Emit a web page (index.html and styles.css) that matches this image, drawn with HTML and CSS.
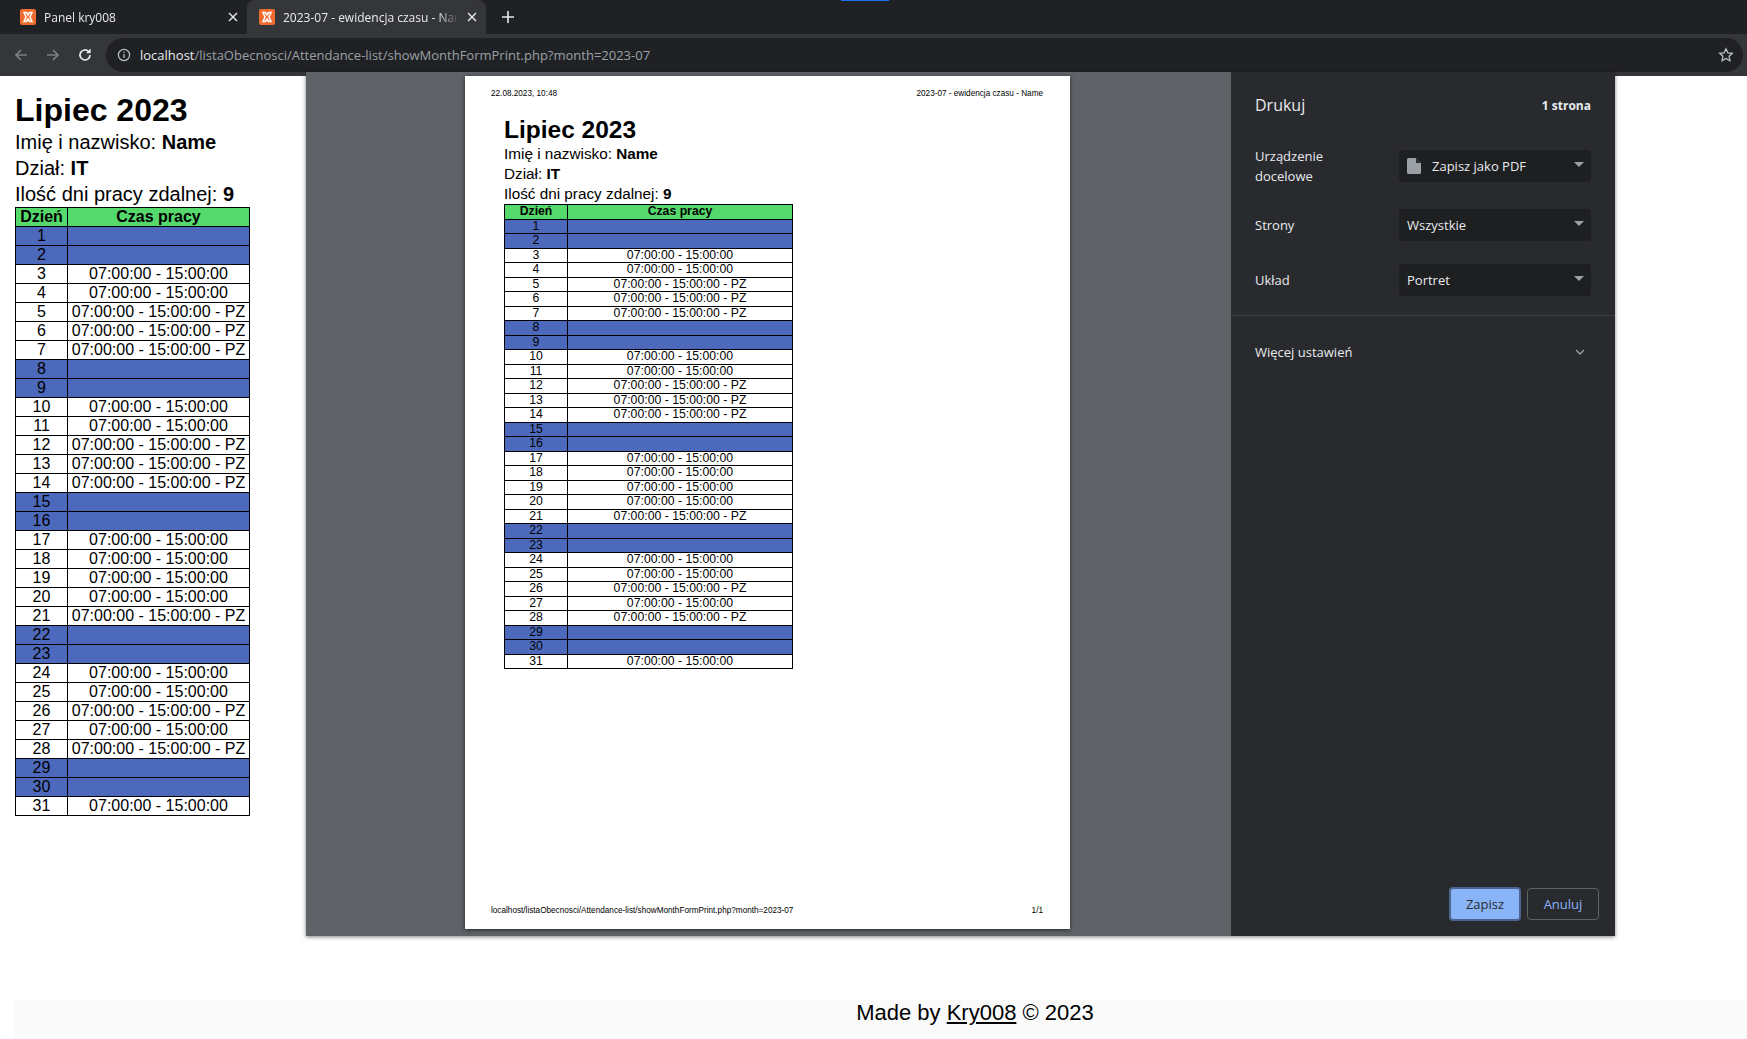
FILE: index.html
```html
<!DOCTYPE html>
<html lang="pl">
<head>
  <meta charset="UTF-8" />
  <title>2023-07 - ewidencja czasu - Name</title>
  <link rel="stylesheet" href="styles.css">
</head>
<body>
  <div class="tab-strip">
    <div class="loading-mark"></div>
    <div class="tab">
      <svg class="favicon" viewBox="0 0 16 16"><rect width="16" height="16" rx="2" fill="#f26b2e"/><path d="M4 3.5h2.5L8 6l1.5-2.5H12l-2 4.5 2 4.5H9.5L8 10l-1.5 2.5H4l2-4.5z" fill="none" stroke="#fff" stroke-width="1.5"/></svg>
      <span class="tab-title">Panel kry008</span>
      <svg class="tab-close" viewBox="0 0 10 10"><path d="M1 1l8 8M9 1l-8 8" stroke="#e8eaed" stroke-width="1.4"/></svg>
    </div>
    <div class="tab tab-active">
      <svg class="favicon" viewBox="0 0 16 16"><rect width="16" height="16" rx="2" fill="#f26b2e"/><path d="M4 3.5h2.5L8 6l1.5-2.5H12l-2 4.5 2 4.5H9.5L8 10l-1.5 2.5H4l2-4.5z" fill="none" stroke="#fff" stroke-width="1.5"/></svg>
      <span class="tab-title">2023-07 - ewidencja czasu - Name</span>
      <svg class="tab-close" viewBox="0 0 10 10"><path d="M1 1l8 8M9 1l-8 8" stroke="#e8eaed" stroke-width="1.4"/></svg>
    </div>
    <svg class="new-tab" viewBox="0 0 12 12"><path d="M6 0v12M0 6h12" stroke="#e8eaed" stroke-width="1.6"/></svg>
  </div>

  <div class="toolbar">
    <svg class="nav-icon" viewBox="0 0 16 16"><path d="M14 8H3M8 3L3 8l5 5" fill="none" stroke="#7b7e83" stroke-width="1.7"/></svg>
    <svg class="nav-icon" viewBox="0 0 16 16"><path d="M2 8h11M8 3l5 5-5 5" fill="none" stroke="#7b7e83" stroke-width="1.7"/></svg>
    <svg class="nav-icon" viewBox="0 0 16 16"><path d="M13 8a5 5 0 1 1-1.5-3.6" fill="none" stroke="#e8eaed" stroke-width="1.7"/><path d="M13.6 1.6v4.6H9z" fill="#e8eaed"/></svg>
    <div class="omnibox">
      <svg class="info-icon" viewBox="0 0 14 14"><circle cx="7" cy="7" r="5.6" fill="none" stroke="#bdc1c6" stroke-width="1.2"/><path d="M7 6v4M7 3.8v1.3" stroke="#bdc1c6" stroke-width="1.2"/></svg>
      <span class="url"><span class="url-host">localhost</span>/listaObecnosci/Attendance-list/showMonthFormPrint.php?month=2023-07</span>
      <svg class="star-icon" viewBox="0 0 16 16"><path d="M8 1.8l1.9 4 4.4.5-3.2 3 .8 4.4L8 11.5l-3.9 2.2.8-4.4-3.2-3 4.4-.5z" fill="none" stroke="#bdc1c6" stroke-width="1.3"/></svg>
    </div>
  </div>

  <div class="content">
    <div class="sheet">
      <h1>Lipiec 2023</h1>
      <p>Imię i nazwisko: <b>Name</b></p>
      <p>Dział: <b>IT</b></p>
      <p>Ilość dni pracy zdalnej: <b>9</b></p>
      <table class="hours">
        <tr class="head"><th>Dzień</th><th>Czas pracy</th></tr>
        <tr class="off"><td>1</td><td></td></tr>
        <tr class="off"><td>2</td><td></td></tr>
        <tr><td>3</td><td>07:00:00 - 15:00:00</td></tr>
        <tr><td>4</td><td>07:00:00 - 15:00:00</td></tr>
        <tr><td>5</td><td>07:00:00 - 15:00:00 - PZ</td></tr>
        <tr><td>6</td><td>07:00:00 - 15:00:00 - PZ</td></tr>
        <tr><td>7</td><td>07:00:00 - 15:00:00 - PZ</td></tr>
        <tr class="off"><td>8</td><td></td></tr>
        <tr class="off"><td>9</td><td></td></tr>
        <tr><td>10</td><td>07:00:00 - 15:00:00</td></tr>
        <tr><td>11</td><td>07:00:00 - 15:00:00</td></tr>
        <tr><td>12</td><td>07:00:00 - 15:00:00 - PZ</td></tr>
        <tr><td>13</td><td>07:00:00 - 15:00:00 - PZ</td></tr>
        <tr><td>14</td><td>07:00:00 - 15:00:00 - PZ</td></tr>
        <tr class="off"><td>15</td><td></td></tr>
        <tr class="off"><td>16</td><td></td></tr>
        <tr><td>17</td><td>07:00:00 - 15:00:00</td></tr>
        <tr><td>18</td><td>07:00:00 - 15:00:00</td></tr>
        <tr><td>19</td><td>07:00:00 - 15:00:00</td></tr>
        <tr><td>20</td><td>07:00:00 - 15:00:00</td></tr>
        <tr><td>21</td><td>07:00:00 - 15:00:00 - PZ</td></tr>
        <tr class="off"><td>22</td><td></td></tr>
        <tr class="off"><td>23</td><td></td></tr>
        <tr><td>24</td><td>07:00:00 - 15:00:00</td></tr>
        <tr><td>25</td><td>07:00:00 - 15:00:00</td></tr>
        <tr><td>26</td><td>07:00:00 - 15:00:00 - PZ</td></tr>
        <tr><td>27</td><td>07:00:00 - 15:00:00</td></tr>
        <tr><td>28</td><td>07:00:00 - 15:00:00 - PZ</td></tr>
        <tr class="off"><td>29</td><td></td></tr>
        <tr class="off"><td>30</td><td></td></tr>
        <tr><td>31</td><td>07:00:00 - 15:00:00</td></tr>
      </table>
    </div>

    <div class="footer">Made by <a href="#">Kry008</a> © 2023</div>

    <!-- Print dialog -->
    <div class="print-dialog">
      <div class="preview">
        <div class="paper">
          <div class="paper-line">
            <span>22.08.2023, 10:48</span>
            <span class="paper-title">2023-07 - ewidencja czasu - Name</span>
          </div>
          <div class="paper-body">
            <h1>Lipiec 2023</h1>
            <p>Imię i nazwisko: <b>Name</b></p>
            <p>Dział: <b>IT</b></p>
            <p>Ilość dni pracy zdalnej: <b>9</b></p>
            <table class="hours hours-small">
              <tr class="head"><th>Dzień</th><th>Czas pracy</th></tr>
              <tr class="off"><td>1</td><td></td></tr>
              <tr class="off"><td>2</td><td></td></tr>
              <tr><td>3</td><td>07:00:00 - 15:00:00</td></tr>
              <tr><td>4</td><td>07:00:00 - 15:00:00</td></tr>
              <tr><td>5</td><td>07:00:00 - 15:00:00 - PZ</td></tr>
              <tr><td>6</td><td>07:00:00 - 15:00:00 - PZ</td></tr>
              <tr><td>7</td><td>07:00:00 - 15:00:00 - PZ</td></tr>
              <tr class="off"><td>8</td><td></td></tr>
              <tr class="off"><td>9</td><td></td></tr>
              <tr><td>10</td><td>07:00:00 - 15:00:00</td></tr>
              <tr><td>11</td><td>07:00:00 - 15:00:00</td></tr>
              <tr><td>12</td><td>07:00:00 - 15:00:00 - PZ</td></tr>
              <tr><td>13</td><td>07:00:00 - 15:00:00 - PZ</td></tr>
              <tr><td>14</td><td>07:00:00 - 15:00:00 - PZ</td></tr>
              <tr class="off"><td>15</td><td></td></tr>
              <tr class="off"><td>16</td><td></td></tr>
              <tr><td>17</td><td>07:00:00 - 15:00:00</td></tr>
              <tr><td>18</td><td>07:00:00 - 15:00:00</td></tr>
              <tr><td>19</td><td>07:00:00 - 15:00:00</td></tr>
              <tr><td>20</td><td>07:00:00 - 15:00:00</td></tr>
              <tr><td>21</td><td>07:00:00 - 15:00:00 - PZ</td></tr>
              <tr class="off"><td>22</td><td></td></tr>
              <tr class="off"><td>23</td><td></td></tr>
              <tr><td>24</td><td>07:00:00 - 15:00:00</td></tr>
              <tr><td>25</td><td>07:00:00 - 15:00:00</td></tr>
              <tr><td>26</td><td>07:00:00 - 15:00:00 - PZ</td></tr>
              <tr><td>27</td><td>07:00:00 - 15:00:00</td></tr>
              <tr><td>28</td><td>07:00:00 - 15:00:00 - PZ</td></tr>
              <tr class="off"><td>29</td><td></td></tr>
              <tr class="off"><td>30</td><td></td></tr>
              <tr><td>31</td><td>07:00:00 - 15:00:00</td></tr>
            </table>
          </div>
          <div class="paper-line paper-foot">
            <span>localhost/listaObecnosci/Attendance-list/showMonthFormPrint.php?month=2023-07</span>
            <span>1/1</span>
          </div>
        </div>
      </div>

      <div class="panel">
        <div class="panel-head">
          <span class="panel-title">Drukuj</span>
          <b class="panel-count">1 strona</b>
        </div>
        <div class="setting setting-first">
          <label>Urządzenie<br>docelowe</label>
          <div class="select">
            <svg class="doc-icon" viewBox="0 0 14 16"><path d="M1.5 0H9l5 5v9.5a1.5 1.5 0 0 1-1.5 1.5h-11A1.5 1.5 0 0 1 0 14.500V1.500A1.500 1.500 0 0 1 1.500 0z" fill="#9aa0a6"/><path d="M9 0v5h5z" fill="#292a2d"/></svg>
            <span>Zapisz jako PDF</span>
          </div>
        </div>
        <div class="setting">
          <label>Strony</label>
          <div class="select"><span>Wszystkie</span></div>
        </div>
        <div class="setting">
          <label>Układ</label>
          <div class="select"><span>Portret</span></div>
        </div>
        <div class="more">
          <span>Więcej ustawień</span>
          <svg class="chevron" viewBox="0 0 10 6"><path d="M1 1l4 4 4-4" fill="none" stroke="#9aa0a6" stroke-width="1.300"/></svg>
        </div>
        <div class="actions">
          <button class="btn-save">Zapisz</button>
          <button class="btn-cancel">Anuluj</button>
        </div>
      </div>
    </div>
  </div>
</body>
</html>
```

FILE: styles.css
```css
* {
  box-sizing: border-box;
}
html, body {
  height: 100%;
}
body {
  margin: 0;
  display: flex;
  flex-direction: column;
  overflow: hidden;
  background: #fff;
  color: #000;
  font-family: 'Liberation Sans', Arial, sans-serif;
}

/* Browser chrome */
.tab-strip {
  position: relative;
  height: 34px;
  flex: none;
  display: flex;
  align-items: flex-end;
  background: #202124;
  padding-left: 8px;
  font-family: 'Open Sans', sans-serif;
  font-size: 12px;
  color: #e8eaed;
}
.loading-mark {
  position: absolute;
  top: 0;
  left: 841px;
  width: 48px;
  height: 1px;
  background: #1a73e8;
}
.tab {
  width: 239px;
  height: 34px;
  display: flex;
  align-items: center;
  padding: 0 7px 0 12px;
  gap: 8px;
}
.tab-active {
  background: #35363a;
  border-radius: 8px 8px 0 0;
  margin-left: 0;
}
.favicon {
  width: 16px;
  height: 16px;
  flex: none;
}
.tab-title {
  flex: 1;
  overflow: hidden;
  white-space: nowrap;
  -webkit-mask-image: linear-gradient(to right, #000 88%, transparent);
  mask-image: linear-gradient(to right, #000 88%, transparent);
}
.tab-close {
  width: 10px;
  height: 10px;
  flex: none;
  margin-right: 2px;
}
.new-tab {
  width: 12px;
  height: 12px;
  align-self: center;
  margin-left: 16px;
}
.toolbar {
  height: 42px;
  flex: none;
  display: flex;
  align-items: flex-start;
  background: #35363a;
  padding: 4px 4px 0 13px;
  font-family: 'Open Sans', sans-serif;
}
.nav-icon {
  width: 16px;
  height: 16px;
  margin: 9px 16px 0 0;
  flex: none;
}
.nav-icon:nth-child(3) {
  margin-right: 13px;
}
.omnibox {
  flex: 1;
  height: 34px;
  display: flex;
  align-items: center;
  background: #202124;
  border-radius: 17px;
  padding: 0 9px 0 11px;
}
.info-icon {
  width: 14px;
  height: 14px;
  margin-right: 9px;
}
.url {
  flex: 1;
  font-size: 13px;
  color: #9aa0a6;
  white-space: nowrap;
}
.url-host {
  color: #e8eaed;
}
.star-icon {
  width: 16px;
  height: 16px;
}

/* Page content */
.content {
  position: relative;
  flex: 1;
  display: flex;
  flex-direction: column;
  justify-content: space-between;
  padding-left: 15px;
}
h1 {
  margin: 0;
  font-size: 32px;
  line-height: 37px;
}
p {
  margin: 0;
}
.sheet {
  padding-top: 16px;
}
.sheet p {
  font-size: 20px;
  line-height: 26px;
}
.hours {
  border-collapse: collapse;
  table-layout: fixed;
  width: 235px;
  font-size: 16px;
}
.hours th, .hours td {
  border: 1px solid #000;
  padding: 0;
  height: 19px;
  line-height: 18px;
  text-align: center;
  white-space: nowrap;
}
.hours th:first-child, .hours td:first-child {
  width: 52px;
}
.head {
  background: #55d96d;
}
.off {
  background: #4d69bb;
}
.footer {
  width: 1920px;
  height: 39px;
  background: #fafafa;
  text-align: center;
  font-size: 22px;
  line-height: 26px;
}
.footer a {
  color: #000;
}

/* Print dialog */
.print-dialog {
  position: absolute;
  top: -4px;
  left: 306px;
  width: 1309px;
  height: 864px;
  display: flex;
  box-shadow: 0 1px 4px rgba(0, 0, 0, 0.5);
}
.preview {
  width: 925px;
  background: #5f6368;
  padding: 4px 0 0 159px;
}
.paper {
  width: 605px;
  height: 853px;
  background: #fff;
  box-shadow: 0 1px 4px rgba(0, 0, 0, 0.6);
  display: flex;
  flex-direction: column;
  padding: 13px 27px 0 26px;
}
.paper-line {
  display: flex;
  justify-content: space-between;
  font-size: 8.200px;
  line-height: 10px;
  flex: none;
}
.paper-title {
  margin-right: 0;
}
.paper-body {
  flex: 1;
  padding: 16px 0 0 13px;
}
.paper-body h1 {
  font-size: 24.500px;
  line-height: 29px;
}
.paper-body p {
  font-size: 15.300px;
  line-height: 20px;
}
.hours-small {
  width: 289px;
  font-size: 12.250px;
}
.hours-small th, .hours-small td {
  height: 14.500px;
  line-height: 13px;
}
.hours-small th:first-child, .hours-small td:first-child {
  width: 63px;
}
.paper-foot {
  margin-bottom: 13px;
}
.panel {
  flex: 1;
  background: #292a2d;
  color: #e8eaed;
  display: flex;
  flex-direction: column;
  font-family: 'Open Sans', sans-serif;
  font-size: 13px;
}
.panel-head {
  display: flex;
  justify-content: space-between;
  align-items: center;
  padding: 20px 24px 0;
  height: 46px;
}
.panel-title {
  font-size: 16px;
}
.panel-count {
  font-size: 12px;
}
.setting {
  display: flex;
  align-items: center;
  justify-content: space-between;
  padding: 0 24px;
  margin-top: 23px;
  line-height: 20px;
}
.setting-first {
  margin-top: 28px;
}
.select {
  position: relative;
  width: 192px;
  height: 32px;
  display: flex;
  align-items: center;
  gap: 11px;
  background: #1e1f21;
  border-radius: 4px;
  padding: 0 8px;
}
.select::after {
  content: "";
  position: absolute;
  right: 7px;
  top: 12px;
  border-left: 5px solid transparent;
  border-right: 5px solid transparent;
  border-top: 5px solid #9aa0a6;
}
.doc-icon {
  width: 14px;
  height: 16px;
  flex: none;
}
.more {
  display: flex;
  justify-content: space-between;
  align-items: center;
  border-top: 1px solid #3f4043;
  margin-top: 19px;
  padding: 27px 30px 0 24px;
}
.chevron {
  width: 10px;
  height: 6px;
}
.actions {
  margin-top: auto;
  display: flex;
  justify-content: flex-end;
  align-items: center;
  gap: 6px;
  padding: 0 16px 15px 0;
}
.actions button {
  font-family: 'Open Sans', sans-serif;
  font-size: 13px;
  border-radius: 4px;
  width: 72px;
  cursor: pointer;
}
.btn-save {
  height: 34px;
  background: #8ab4f8;
  color: #292a2d;
  border: 2px solid #4a6690;
}
.btn-cancel {
  height: 32px;
  background: transparent;
  color: #8ab4f8;
  border: 1px solid #5f6368;
}
```
